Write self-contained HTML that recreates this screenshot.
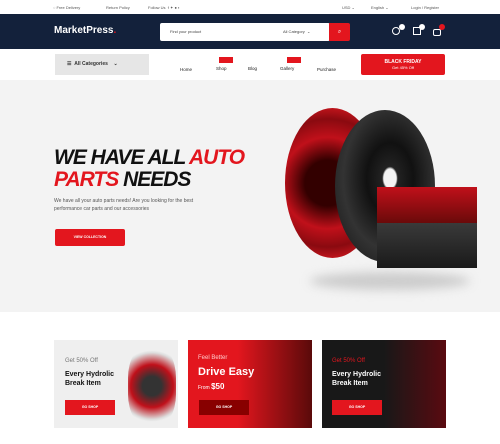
<!DOCTYPE html>
<html><head><style>
*{margin:0;padding:0;box-sizing:border-box}
body{width:500px;height:444px;overflow:hidden;background:#fff;font-family:"Liberation Sans",sans-serif;position:relative}
.a{position:absolute}
.t{font-size:4px;color:#555}
</style></head><body>
<div class="a t" style="left:53px;top:5px">◌ Free Delivery</div>
<div class="a t" style="left:106px;top:5px">Return Policy</div>
<div class="a t" style="left:148px;top:5px">Follow Us &nbsp;f ✦ ● ▪</div>
<div class="a t" style="left:342px;top:5px">USD ⌄</div>
<div class="a t" style="left:371px;top:5px">English ⌄</div>
<div class="a t" style="left:411px;top:5px">Login / Register</div>
<div class="a" style="left:0;top:14px;width:500px;height:35px;background:#13213b"></div>
<div class="a" style="left:54px;top:25px;color:#fff;font-weight:bold;font-size:10px">MarketPress<span style="color:#e3161e">.</span></div>
<div class="a" style="left:160px;top:23px;width:170px;height:18px;background:#fff;border-radius:2px"></div>
<div class="a" style="left:170px;top:29px;font-size:4px;color:#444">Find your product</div>
<div class="a" style="left:283px;top:29px;font-size:4px;color:#444">All Category &nbsp;⌄</div>
<div class="a" style="left:329px;top:23px;width:21px;height:18px;background:#e3161e;border-radius:0 2px 2px 0;color:#fff;font-size:6px;text-align:center;line-height:18px">⌕</div>
<div class="a" style="left:392px;top:27px;width:8px;height:8px;border:1px solid #fff;border-radius:50%"></div>
<div class="a" style="left:413px;top:27px;width:8px;height:8px;border:1px solid #fff"></div>
<div class="a" style="left:433px;top:29px;width:8px;height:7px;border:1px solid #fff;border-radius:2px"></div>
<div class="a" style="left:399px;top:24px;width:6px;height:6px;background:#fff;border-radius:50%"></div>
<div class="a" style="left:419px;top:24px;width:6px;height:6px;background:#fff;border-radius:50%"></div>
<div class="a" style="left:439px;top:24px;width:6px;height:6px;background:#e3161e;border-radius:50%"></div>
<div class="a" style="left:55px;top:54px;width:94px;height:21px;background:#e6e6e6"></div>
<div class="a" style="left:67px;top:61px;font-size:5px;font-weight:bold;color:#333">☰ &nbsp;All Categories &nbsp;&nbsp;&nbsp;⌄</div>
<div class="a" style="left:180px;top:67px;font-size:4.5px;color:#222">Home</div>
<div class="a" style="left:216px;top:66px;font-size:4.5px;color:#222">Shop</div>
<div class="a" style="left:248px;top:66px;font-size:4.5px;color:#222">Blog</div>
<div class="a" style="left:280px;top:66px;font-size:4.5px;color:#222">Gallery</div>
<div class="a" style="left:317px;top:67px;font-size:4.5px;color:#222">Purchase</div>
<div class="a" style="left:219px;top:57px;width:14px;height:6px;background:#e3161e"></div>
<div class="a" style="left:287px;top:57px;width:14px;height:6px;background:#e3161e"></div>
<div class="a" style="left:361px;top:54px;width:84px;height:21px;background:#e3161e;border-radius:2px;color:#fff;text-align:center;font-size:5px;font-weight:bold;padding-top:5px;line-height:6px">BLACK FRIDAY<br><span style="font-weight:normal;font-size:4px">Get 45% Off</span></div>
<div class="a" style="left:0;top:80px;width:500px;height:232px;background:#f3f3f3"></div>
<div class="a" style="left:54px;top:147px;font-size:21px;font-weight:900;font-style:italic;letter-spacing:-1px;line-height:22px;color:#111">WE HAVE ALL <span style="color:#e3161e">AUTO</span><br><span style="color:#e3161e">PARTS</span> NEEDS</div>
<div class="a" style="left:54px;top:197px;font-size:5px;line-height:8px;color:#555">We have all your auto parts needs! Are you looking for the best<br>performance car parts and our accessories</div>
<div class="a" style="left:55px;top:229px;width:70px;height:17px;background:#e3161e;border-radius:2px;color:#fff;font-size:3.5px;font-weight:bold;text-align:center;line-height:17px">VIEW COLLECTION</div>
<div class="a" style="left:310px;top:272px;width:160px;height:18px;border-radius:50%;background:#ccc;filter:blur(5px)"></div>
<div class="a" style="left:285px;top:108px;width:95px;height:150px;border-radius:50%;background:radial-gradient(circle at 45% 50%,#300 25%,#c0101a 50%,#8a0a10 70%,#e01a22 90%)"></div>
<div class="a" style="left:335px;top:110px;width:100px;height:152px;border-radius:50%;background:radial-gradient(ellipse at 55% 45%,#f3f3f3 8%,#222 10%,#111 30%,#333 60%,#1a1a1a 90%,#555 96%)"></div>
<div class="a" style="left:377px;top:187px;width:100px;height:36px;background:linear-gradient(#c0101a,#6a0a0a)"></div>
<div class="a" style="left:377px;top:223px;width:100px;height:45px;background:linear-gradient(#3a3a3a,#1a1a1a)"></div>
<div class="a" style="left:54px;top:340px;width:124px;height:88px;background:#efefef"></div>
<div class="a" style="left:128px;top:345px;width:48px;height:82px;border-radius:40%;background:radial-gradient(circle,#333 20%,#c0101a 45%,#ddd 70%,#efefef 75%)"></div>
<div class="a" style="left:65px;top:358px;font-size:6px;color:#777">Get 50% Off</div>
<div class="a" style="left:65px;top:370px;font-size:7px;font-weight:bold;color:#111;line-height:9px">Every Hydrolic<br>Break Item</div>
<div class="a" style="left:65px;top:400px;width:50px;height:15px;background:#e3161e;color:#fff;font-size:3.5px;font-weight:bold;text-align:center;line-height:15px">GO SHOP</div>
<div class="a" style="left:188px;top:340px;width:124px;height:88px;background:linear-gradient(90deg,#e3161e 40%,#5a0a0a)"></div>
<div class="a" style="left:198px;top:355px;font-size:6px;color:#fcc">Feel Better</div>
<div class="a" style="left:198px;top:366px;font-size:11px;font-weight:bold;color:#fff">Drive Easy</div>
<div class="a" style="left:198px;top:382px;font-size:5px;color:#fff">From <b style="font-size:8px">$50</b></div>
<div class="a" style="left:199px;top:400px;width:50px;height:15px;background:#800;color:#fff;font-size:3.5px;font-weight:bold;text-align:center;line-height:15px">GO SHOP</div>
<div class="a" style="left:322px;top:340px;width:124px;height:88px;background:linear-gradient(90deg,#181818 50%,#5a0a10)"></div>
<div class="a" style="left:332px;top:358px;font-size:6px;color:#e3161e">Get 50% Off</div>
<div class="a" style="left:332px;top:370px;font-size:7px;font-weight:bold;color:#fff;line-height:9px">Every Hydrolic<br>Break Item</div>
<div class="a" style="left:332px;top:400px;width:50px;height:15px;background:#e3161e;color:#fff;font-size:3.5px;font-weight:bold;text-align:center;line-height:15px">GO SHOP</div>
</body></html>
